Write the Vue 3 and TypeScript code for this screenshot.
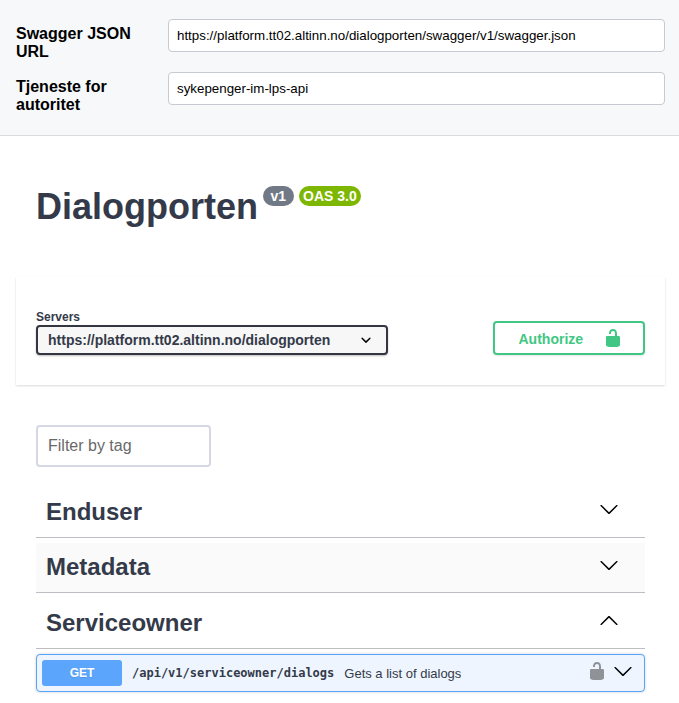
<script setup lang="ts">
import { ref } from 'vue'

interface Field {
  id: string
  label: string
  value: string
}

interface Tag {
  name: string
  open: boolean
}

const fields = ref<Field[]>([
  {
    id: 'swagger-url',
    label: 'Swagger JSON URL',
    value: 'https://platform.tt02.altinn.no/dialogporten/swagger/v1/swagger.json',
  },
  { id: 'service', label: 'Tjeneste for autoritet', value: 'sykepenger-im-lps-api' },
])

const tags = ref<Tag[]>([
  { name: 'Enduser', open: false },
  { name: 'Metadata', open: false },
  { name: 'Serviceowner', open: true },
])

const server = 'https://platform.tt02.altinn.no/dialogporten'
const filter = ref('')

const arrowUp =
  'M 17.418 14.908 C 17.69 15.176 18.127 15.176 18.397 14.908 C 18.667 14.64 18.668 14.207 18.397 13.939 L 10.489 6.109 C 10.219 5.841 9.782 5.841 9.51 6.109 L 1.602 13.939 C 1.332 14.207 1.332 14.64 1.602 14.908 C 1.873 15.176 2.311 15.176 2.581 14.908 L 10 7.767 L 17.418 14.908 Z'
const arrowDown =
  'M17.418 6.109c.272-.268.709-.268.979 0s.271.701 0 .969l-7.908 7.83c-.27.268-.707.268-.979 0l-7.908-7.83c-.27-.268-.27-.701 0-.969.271-.268.709-.268.979 0L10 13.25l7.418-7.141z'
const unlocked =
  'M15.8 8H14V5.6C14 2.703 12.665 1 10 1 7.334 1 6 2.703 6 5.6V6h2v-.801C8 3.754 8.797 3 10 3c1.203 0 2 .754 2 2.199V8H4c-.553 0-1 .646-1 1.199V17c0 .549.428 1.139.951 1.307l1.197.387C5.672 18.861 6.55 19 7.1 19h5.8c.549 0 1.428-.139 1.951-.307l1.196-.387c.524-.167.953-.757.953-1.306V9.199C17 8.646 16.352 8 15.8 8z'
</script>

<template>
  <div class="page">
    <form class="topbar" @submit.prevent>
      <div v-for="field in fields" :key="field.id" class="field">
        <label class="field-label" :for="field.id">{{ field.label }}</label>
        <input :id="field.id" v-model="field.value" class="field-input" type="text" />
      </div>
    </form>

    <header class="info">
      <h1 class="title">Dialogporten</h1>
      <span class="badge">v1</span>
      <span class="badge badge-oas">OAS 3.0</span>
    </header>

    <section class="scheme">
      <div class="servers">
        <span class="servers-title">Servers</span>
        <button class="server-select" type="button">
          <span>{{ server }}</span>
          <svg class="icon" viewBox="0 0 20 20">
            <path
              d="M13.418 7.859a.695.695 0 01.978 0 .68.68 0 010 .969l-3.908 3.83a.697.697 0 01-.979 0l-3.908-3.83a.68.68 0 010-.969.695.695 0 01.978 0L10 11l3.418-3.141z"
            />
          </svg>
        </button>
      </div>
      <button class="authorize" type="button">
        <span>Authorize</span>
        <svg class="icon" viewBox="0 0 20 20"><path :d="unlocked" /></svg>
      </button>
    </section>

    <main class="operations">
      <input v-model="filter" class="filter" type="text" placeholder="Filter by tag" />

      <h3
        v-for="tag in tags"
        :key="tag.name"
        class="tag"
        :class="{ shaded: tag.name === 'Metadata' }"
        @click="tag.open = !tag.open"
      >
        <span>{{ tag.name }}</span>
        <svg class="icon" viewBox="0 0 20 20"><path :d="tag.open ? arrowUp : arrowDown" /></svg>
      </h3>

      <div v-if="tags[2].open" class="operation">
        <span class="method">GET</span>
        <span class="path">/api/v1/serviceowner/dialogs</span>
        <span class="summary">Gets a list of dialogs</span>
        <svg class="icon lock" viewBox="0 0 20 20"><path :d="unlocked" /></svg>
        <svg class="icon expand" viewBox="0 0 20 20"><path :d="arrowDown" /></svg>
      </div>
    </main>
  </div>
</template>

<style>
body {
  background: #fff;
}
</style>

<style scoped>
.page,
.page * {
  box-sizing: border-box;
}

.page {
  min-height: 703px;
  color: #343a49;
  font-family: 'Liberation Sans', Arial, sans-serif;
}

button,
input {
  margin: 0;
  font-family: inherit;
  outline: none;
}

.icon {
  display: block;
  flex: none;
  width: 20px;
  height: 20px;
  fill: #000;
}

.topbar {
  display: flex;
  flex-direction: column;
  gap: 17px;
  height: 136px;
  padding: 19px 14px 0 16px;
  background: #f7f8fa;
  border-bottom: 1px solid #d8dbdf;
}

.field {
  display: flex;
  align-items: flex-start;
  height: 36px;
}

.field-label {
  width: 152px;
  padding: 6px 20px 0 0;
  color: #000;
  font-size: 16px;
  font-weight: 700;
  line-height: 18px;
}

.field-input {
  flex: 1;
  height: 33px;
  padding: 0 8px;
  color: #000;
  background: #fff;
  border: 1px solid #c6cbd3;
  border-radius: 4px;
  font-size: 13.333px;
}

.info {
  display: flex;
  align-items: flex-start;
  height: 141px;
  padding: 50px 36px 0;
}

.title {
  margin: 0 5px 0 0;
  font-size: 36px;
  font-weight: 700;
  line-height: 42px;
}

.badge {
  height: 20px;
  margin-right: 5px;
  padding: 0 7.5px;
  color: #fff;
  background: #717886;
  border-radius: 20px;
  font-size: 14px;
  font-weight: 700;
  line-height: 21px;
}

.badge-oas {
  padding: 0 4.5px;
  background: #7db701;
}

.scheme {
  display: flex;
  align-items: flex-end;
  justify-content: space-between;
  height: 108px;
  margin: 0 14px 0 16px;
  padding: 0 20px 30px;
  background: #fff;
  box-shadow: 0 1px 2px rgba(0, 0, 0, 0.15);
}

.servers {
  display: flex;
  flex-direction: column;
}

.servers-title {
  font-size: 12px;
  font-weight: 700;
  line-height: 16px;
}

.server-select {
  display: flex;
  align-items: center;
  justify-content: space-between;
  width: 352px;
  height: 30px;
  padding: 0 10px;
  color: #343a49;
  background: #f7f7f7;
  border: 2px solid #343642;
  border-radius: 4px;
  box-shadow: 0 1px 2px rgba(0, 0, 0, 0.25);
  font-size: 14px;
  font-weight: 700;
}

.authorize {
  display: flex;
  align-items: center;
  justify-content: space-between;
  width: 152px;
  height: 34px;
  padding: 0 20px 0 23.5px;
  color: #41c783;
  background: transparent;
  border: 2px solid #41c783;
  border-radius: 4px;
  box-shadow: 0 1px 2px rgba(0, 0, 0, 0.1);
  font-size: 14px;
  font-weight: 700;
}

.authorize span {
  padding-top: 1px;
}

.authorize .icon {
  fill: #41c783;
}

.operations {
  padding: 40px 34px 0 36px;
}

.filter {
  display: block;
  width: 175px;
  height: 42px;
  margin-bottom: 20px;
  padding: 0 10px;
  background: #fff;
  border: 2px solid #d5d8e4;
  border-radius: 4px;
  font-size: 16px;
}

.filter::placeholder {
  color: #696969;
}

.tag {
  display: flex;
  align-items: flex-start;
  justify-content: space-between;
  height: 50.66px;
  margin: 0 0 5px;
  padding: 10.7px 26px 0 10px;
  border-bottom: 1px solid #bdbec4;
  font-size: 24px;
  font-weight: 700;
  line-height: 27px;
  cursor: pointer;
}

.tag .icon {
  margin-top: 1.3px;
}

.shaded {
  background: #fafafa;
}

.operation {
  display: flex;
  align-items: center;
  height: 38px;
  padding: 0 11px 0 5px;
  background: #eef5fe;
  border: 1px solid #58a3fb;
  border-radius: 4px;
  box-shadow: 0 0 3px rgba(0, 0, 0, 0.19);
}

.method {
  width: 80px;
  height: 26px;
  color: #fff;
  background: #5ba5fc;
  border-radius: 3px;
  font-size: 12px;
  font-weight: 700;
  line-height: 26px;
  text-align: center;
  text-shadow: 0 1px 0 rgba(0, 0, 0, 0.1);
}

.path {
  padding: 0 10px;
  font-family: 'DejaVu Sans Mono', monospace;
  font-size: 12px;
  font-weight: 700;
}

.summary {
  flex: 1;
  padding-top: 1px;
  font-size: 13px;
}

.lock,
.expand {
  margin-top: -4px;
}

.lock {
  margin-right: 6px;
  fill: #8f9397;
}
</style>
